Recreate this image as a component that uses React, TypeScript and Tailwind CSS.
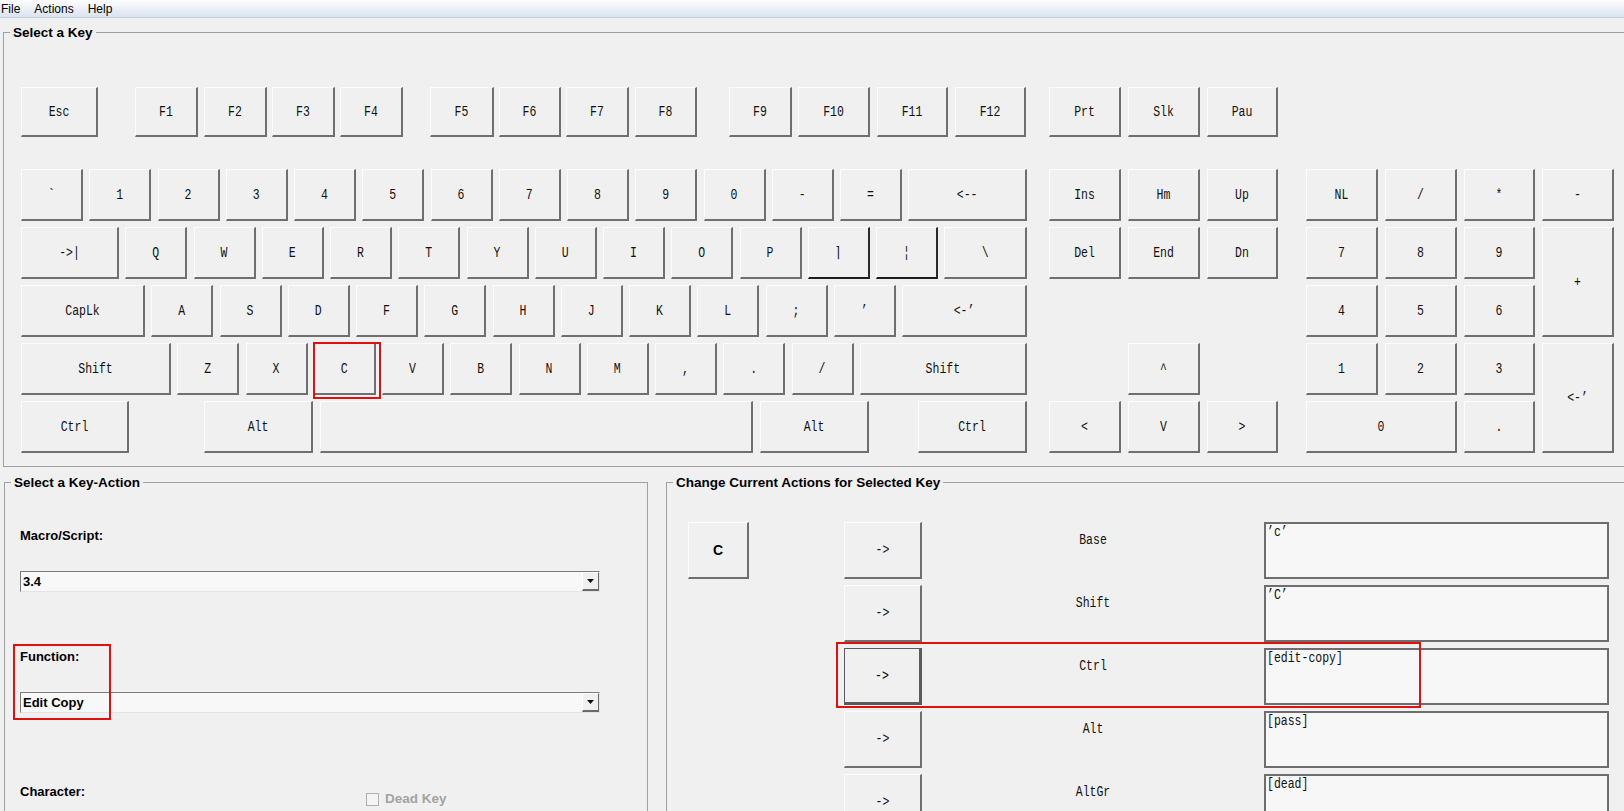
const mono = "font-['Liberation_Mono',monospace]"

const raised =
  'bg-[#f0f0f0] border-t border-l border-t-[#fcfcfc] border-l-[#fcfcfc] border-b-2 border-r-2 border-b-[#6f6f6f] border-r-[#6f6f6f]'
const raisedDark =
  'bg-[#f0f0f0] border-t border-l border-t-[#fcfcfc] border-l-[#fcfcfc] border-b-2 border-r-2 border-b-[#1c1c1c] border-r-[#2a2a2a]'

interface KeyProps {
  label: string
  className?: string
  dark?: boolean
}

const Key = ({ label, className = '', dark }: KeyProps) => (
  <div className={`flex items-center justify-center ${dark ? raisedDark : raised} ${className}`}>
    <span className={`inline-block scale-y-130 ${mono} text-[11.5px] leading-none text-[#111]`}>{label}</span>
  </div>
)

const MenuBar = () => (
  <div className="flex h-[18px] items-center border-b border-[#c4d0de] bg-gradient-to-b from-[#fdfdfe] to-[#dae3ef] text-[12px] leading-none">
    <span className="pl-[1px]">File</span>
    <span className="ml-[14px]">Actions</span>
    <span className="ml-[14px]">Help</span>
  </div>
)

const row2 = ['1', '2', '3', '4', '5', '6', '7', '8', '9', '0', '-', '=']
const row3 = ['Q', 'W', 'E', 'R', 'T', 'Y', 'U', 'I', 'O', 'P']
const row4 = ['A', 'S', 'D', 'F', 'G', 'H', 'J', 'K', 'L', ';', '\u2019']
const row5a = ['Z', 'X']
const row5b = ['V', 'B', 'N', 'M', ',', '.', '/']

const Keyboard = () => (
  <div className="pl-[17px] pt-[47px] pb-[13px]">
    {/* function row */}
    <div className="flex h-[50px]">
      <Key label="Esc" className="w-[77px]" />
      <Key label="F1" className="ml-[37px] w-[63px]" />
      <Key label="F2" className="ml-[6px] w-[63px]" />
      <Key label="F3" className="ml-[5px] w-[63px]" />
      <Key label="F4" className="ml-[5px] w-[63px]" />
      <Key label="F5" className="ml-[27px] w-[64px]" />
      <Key label="F6" className="ml-[5px] w-[62px]" />
      <Key label="F7" className="ml-[5px] w-[63px]" />
      <Key label="F8" className="ml-[6px] w-[62px]" />
      <Key label="F9" className="ml-[32px] w-[63px]" />
      <Key label="F10" className="ml-[6px] w-[72px]" />
      <Key label="F11" className="ml-[7px] w-[71px]" />
      <Key label="F12" className="ml-[7px] w-[71px]" />
      <Key label="Prt" className="ml-[23px] w-[72px]" />
      <Key label="Slk" className="ml-[7px] w-[72px]" />
      <Key label="Pau" className="ml-[7px] w-[71px]" />
    </div>

    <div className="mt-[32px] flex">
      {/* main block */}
      <div className="flex w-[1006px] flex-col gap-[6px]">
        <div className="flex h-[52px] gap-[6.25px]">
          <Key label="`" className="w-[62px]" />
          {row2.map((k) => (
            <Key key={k} label={k} className="w-[62px]" />
          ))}
          <Key label="<--" className="flex-1" />
        </div>
        <div className="flex h-[52px] gap-[6.25px]">
          <Key label="->|" className="w-[98px]" />
          {row3.map((k) => (
            <Key key={k} label={k} className="w-[62px]" />
          ))}
          <Key label={'\u2309'} className="w-[62px]" dark />
          <Key label={'\u00a6'} className="w-[62px]" dark />
          <Key label="\" className="flex-1" />
        </div>
        <div className="flex h-[52px] gap-[6.25px]">
          <Key label="CapLk" className="w-[124px]" />
          {row4.map((k) => (
            <Key key={k} label={k} className="w-[62px]" />
          ))}
          <Key label={'<-\u2019'} className="flex-1" />
        </div>
        <div className="flex h-[52px] gap-[6.25px]">
          <Key label="Shift" className="w-[150px]" />
          {row5a.map((k) => (
            <Key key={k} label={k} className="w-[62px]" />
          ))}
          <div className="relative w-[62px]">
            <Key label="C" className="h-full w-full" />
            <div className="pointer-events-none absolute -left-[1px] -top-[1px] h-[57px] w-[68px] border-2 border-[#e01010]" />
          </div>
          {row5b.map((k) => (
            <Key key={k} label={k} className="w-[62px]" />
          ))}
          <Key label="Shift" className="flex-1" />
        </div>
        <div className="flex h-[52px]">
          <Key label="Ctrl" className="w-[108px]" />
          <Key label="Alt" className="ml-[75px] w-[109px]" />
          <Key label="" className="ml-[7px] w-[433px]" />
          <Key label="Alt" className="ml-[7px] w-[109px]" />
          <Key label="Ctrl" className="ml-[49px] flex-1" />
        </div>
      </div>

      {/* navigation */}
      <div className="ml-[22px] grid auto-rows-[52px] grid-cols-[72px_72px_71px] gap-x-[7px] gap-y-[6px]">
        <Key label="Ins" />
        <Key label="Hm" />
        <Key label="Up" />
        <Key label="Del" />
        <Key label="End" />
        <Key label="Dn" />
        <div className="col-span-3" />
        <div />
        <Key label="^" />
        <div />
        <Key label="<" />
        <Key label="V" />
        <Key label=">" />
      </div>

      {/* numpad */}
      <div className="ml-[28px] grid auto-rows-[52px] grid-cols-[72px_72px_71px_72px] gap-x-[7px] gap-y-[6px]">
        <Key label="NL" />
        <Key label="/" />
        <Key label="*" />
        <Key label="-" />
        <Key label="7" />
        <Key label="8" />
        <Key label="9" />
        <Key label="+" className="row-span-2" />
        <Key label="4" />
        <Key label="5" />
        <Key label="6" />
        <Key label="1" />
        <Key label="2" />
        <Key label="3" />
        <Key label={'<-\u2019'} className="row-span-2" />
        <Key label="0" className="col-span-2" />
        <Key label="." />
      </div>
    </div>
  </div>
)

const Dropdown = ({ value, className = '' }: { value: string; className?: string }) => (
  <div
    className={`flex h-[21px] w-[580px] border border-[#7a7a7a] border-b-[#e4e4e4] border-r-[#e4e4e4] bg-[#f8f8f8] ${className}`}
  >
    <span className="flex-1 pl-[2px] text-[13px] font-bold leading-[19px]">{value}</span>
    <div className="flex w-[17px] items-center justify-center border-l border-t border-l-[#ffffff] border-t-[#ffffff] border-b-2 border-r border-b-[#6a6a6a] border-r-[#6a6a6a] bg-[#f0f0f0]">
      <svg width="7" height="4" viewBox="0 0 7 4">
        <path d="M0 0h7L3.5 4z" fill="#111" />
      </svg>
    </div>
  </div>
)

const KeyAction = () => (
  <fieldset className="ml-[4px] mt-[8px] h-[400px] w-[644px] border border-[#a0a0a0]">
    <legend className="ml-[6px] px-[3px] text-[13.5px] font-bold leading-[15px]">Select a Key-Action</legend>
    <div className="pl-[15px] pt-[38px]">
      <div className="text-[13px] font-bold leading-4">Macro/Script:</div>
      <Dropdown value="3.4" className="mt-[27px]" />
      <div className="relative mt-[57px]">
        <div className="text-[13px] font-bold leading-4">Function:</div>
        <Dropdown value="Edit Copy" className="mt-[27px]" />
        <div className="pointer-events-none absolute -left-[7px] -top-[5px] h-[76px] w-[98px] border-2 border-[#e01010]" />
      </div>
      <div className="mt-[71px] flex">
        <div className="w-[346px] text-[13px] font-bold leading-4">Character:</div>
        <div className="mt-[7px] flex items-center">
          <div className="h-[13px] w-[13px] border border-[#b0b0b0] bg-[#f4f4f4]" />
          <span className="ml-[6px] text-[13.5px] font-bold leading-4 text-[#a3a3a3]">Dead Key</span>
        </div>
      </div>
    </div>
  </fieldset>
)

const actions = [
  { mod: 'Base', val: '\u2019c\u2019' },
  { mod: 'Shift', val: '\u2019C\u2019' },
  { mod: 'Ctrl', val: '[edit-copy]', active: true },
  { mod: 'Alt', val: '[pass]' },
  { mod: 'AltGr', val: '[dead]' },
]

const CurrentActions = () => (
  <fieldset className="ml-[18px] mt-[8px] h-[400px] flex-1 border border-r-0 border-[#a0a0a0]">
    <legend className="ml-[6px] px-[3px] text-[13.5px] font-bold leading-[15px]">
      Change Current Actions for Selected Key
    </legend>
    <div className="flex pl-[21px] pt-[32px]">
      <div className={`flex h-[57px] w-[61px] items-center justify-center ${raised}`}>
        <span className="text-[14px] font-bold">C</span>
      </div>
      <div className="ml-[95px] flex flex-col gap-[6px]">
        {actions.map((a) => (
          <div key={a.mod} className="relative flex h-[57px]">
            {a.active ? (
              <div className="flex w-[78px] items-center justify-center border border-[#5a5a5a] border-b-[3px] border-r-[3px] bg-[#f0f0f0]">
                <span className={`inline-block scale-y-130 ${mono} text-[11.5px] leading-none`}>-&gt;</span>
              </div>
            ) : (
              <Key label="->" className="w-[78px]" />
            )}
            <div className="w-[342px] pt-[4px] text-center">
              <span className={`inline-block scale-y-130 ${mono} text-[11.5px] leading-4 text-[#111]`}>{a.mod}</span>
            </div>
            <div className="flex w-[345px] items-start border-2 border-[#6e6e6e] bg-[#f7f7f7] pl-[1px] pt-[3px]">
              <span className={`scale-y-130 ${mono} text-[11.5px] leading-[10px] text-[#111]`}>{a.val}</span>
            </div>
            {a.active && (
              <div className="pointer-events-none absolute -left-[8px] -top-[6px] h-[66px] w-[585px] border-2 border-[#e01010]" />
            )}
          </div>
        ))}
      </div>
    </div>
  </fieldset>
)

export default function App() {
  return (
    <div className="h-[811px] w-[1624px] overflow-hidden bg-[#f0f0f0] font-['Liberation_Sans',Arial,sans-serif] text-black">
      <MenuBar />
      <fieldset className="ml-[3px] mt-[7px] border border-r-0 border-[#a0a0a0]">
        <legend className="ml-[6px] px-[3px] text-[13.5px] font-bold leading-[15px]">Select a Key</legend>
        <Keyboard />
      </fieldset>
      <div className="flex">
        <KeyAction />
        <CurrentActions />
      </div>
    </div>
  )
}
